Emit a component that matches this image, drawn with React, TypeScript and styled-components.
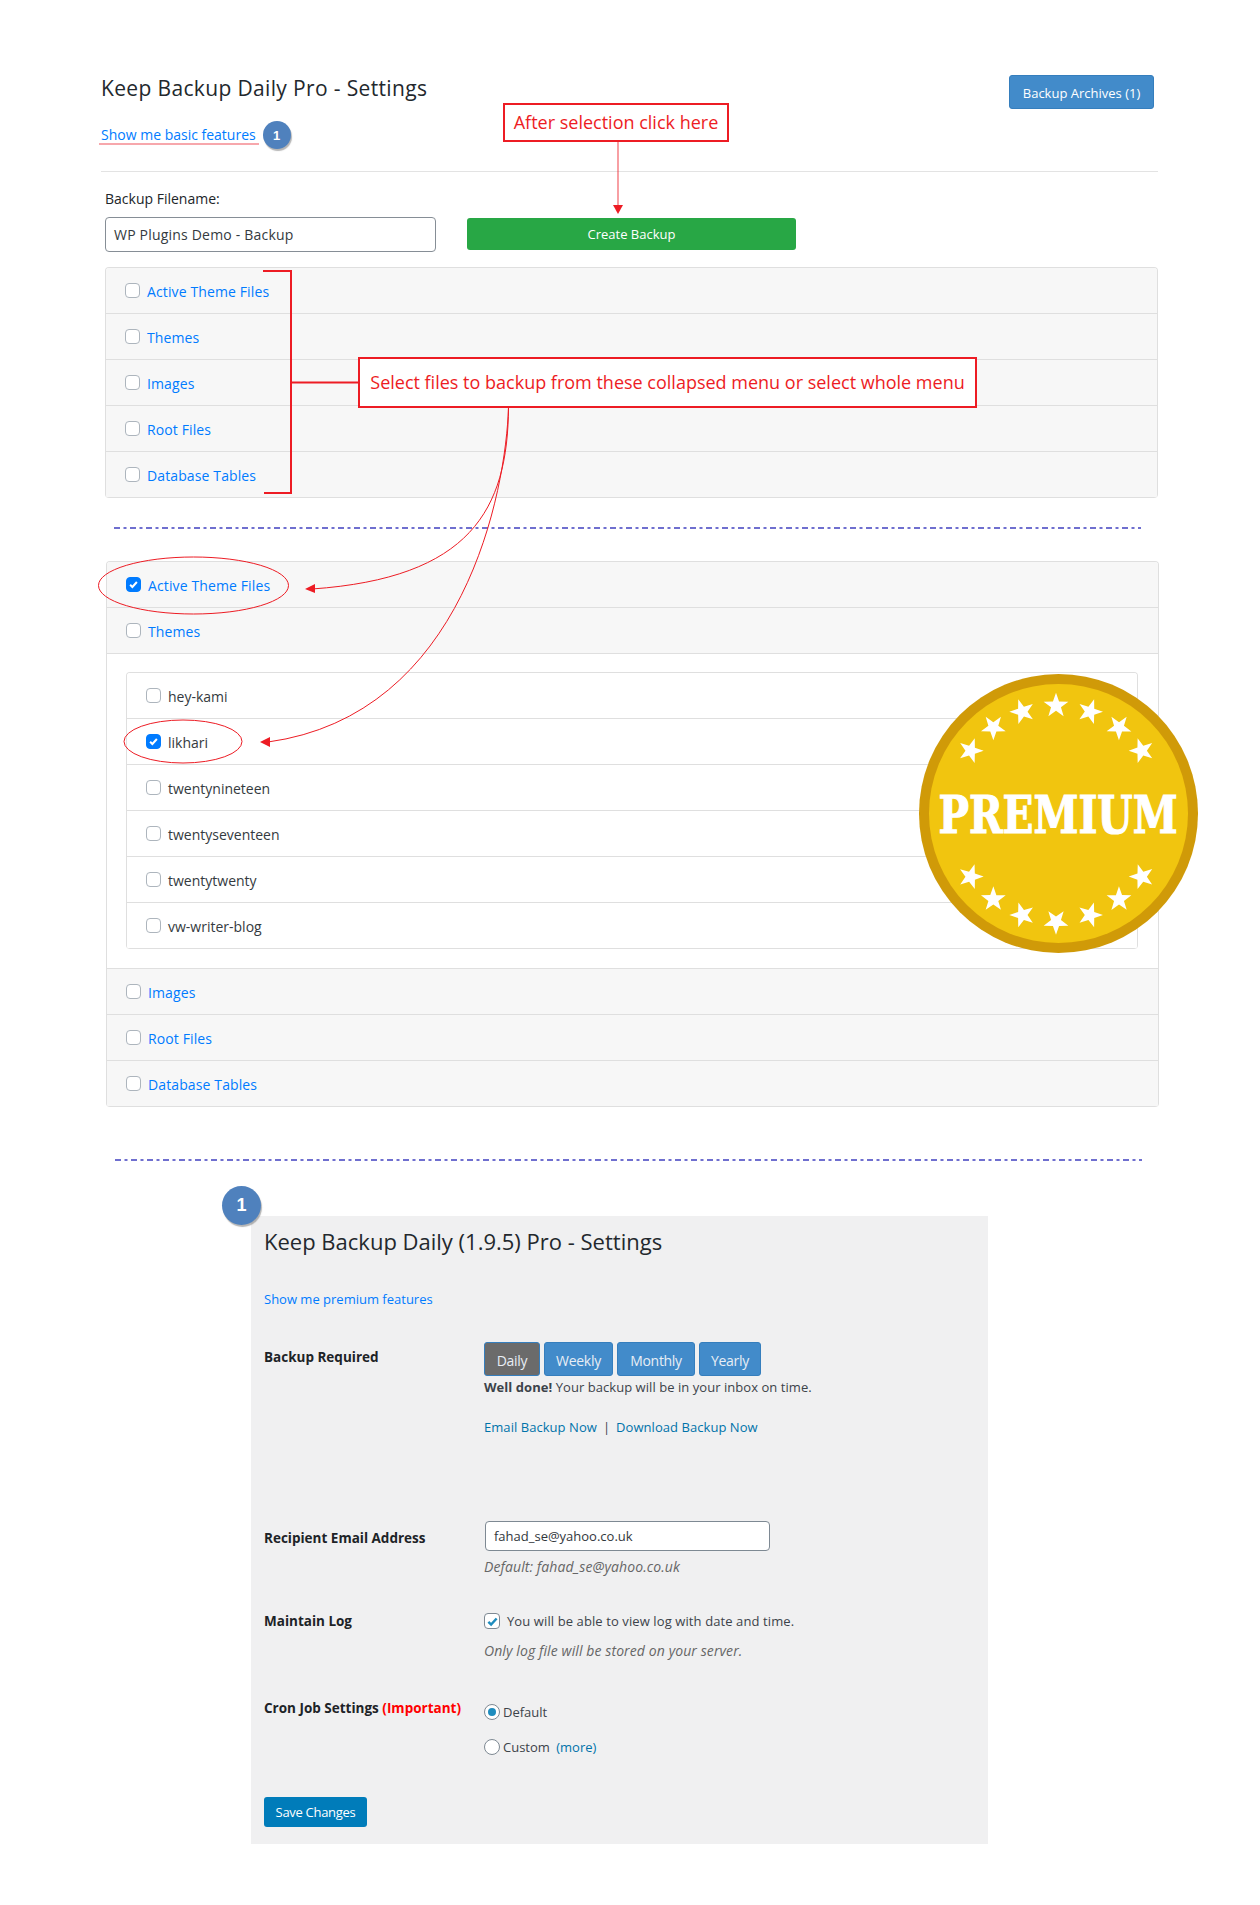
import React from 'react';
import styled, { createGlobalStyle } from 'styled-components';

const FONT = `"Open Sans", "Noto Sans", "Liberation Sans", sans-serif`;
const RED = '#ed1c24';

const Global = createGlobalStyle`
  html, body { margin: 0; padding: 0; background: #fff; }
  * { box-sizing: border-box; }
  body { font-family: ${FONT}; color: #212529; }
`;

const Page = styled.div`
  position: relative;
  width: 1260px;
  height: 1905px;
  overflow: hidden;
  padding-top: 74px;
`;

const Top = styled.div`
  margin: 0 102px 0 105px;
`;

const Header = styled.header`
  display: flex;
  justify-content: space-between;
  align-items: flex-start;
  height: 98px;
  border-bottom: 1px solid #e3e3e3;
  margin-left: -4px;
  padding-right: 4px;
`;

const HeaderLeft = styled.div`
  display: flex;
  flex-direction: column;
  gap: 19px;
`;

const Title = styled.h1`
  margin: 0;
  font-size: 21px;
  line-height: 28px;
  font-weight: 400;
  letter-spacing: 0.35px;
  color: #23282d;
`;

const LinkRow = styled.div`
  display: flex;
  align-items: center;
  gap: 7px;
  height: 28px;
`;

const BasicLink = styled.a`
  font-size: 14px;
  line-height: 20px;
  color: #007bff;
`;

const Badge = styled.span<{ $size: number; $font: number }>`
  display: inline-flex;
  align-items: center;
  justify-content: center;
  width: ${p => p.$size}px;
  height: ${p => p.$size}px;
  border-radius: 50%;
  background: #4f81bd;
  color: #fff;
  font-family: "Liberation Sans", sans-serif;
  font-weight: 700;
  font-size: ${p => p.$font}px;
  box-shadow: 1px 2px 1px rgba(120, 120, 120, 0.55);
  flex: none;
`;

const ArchiveButton = styled.button`
  width: 145px;
  height: 34px;
  margin-top: 1px;
  background: #428bca;
  border: 1px solid #357ebd;
  border-radius: 3px;
  color: #fff;
  font-family: ${FONT};
  font-size: 13px;
  padding: 2px 0 0;
`;

const FileLabel = styled.div`
  margin-top: 17px;
  font-size: 14px;
  line-height: 20px;
`;

const FileRow = styled.div`
  display: flex;
  align-items: center;
  gap: 31px;
  margin-top: 8px;
  height: 35px;
`;

const FileInput = styled.div`
  width: 331px;
  height: 35px;
  border: 1px solid #868e96;
  border-radius: 4px;
  padding: 0 8px;
  display: flex;
  align-items: center;
  font-size: 14px;
  letter-spacing: 0.2px;
  color: #343a40;
`;

const GreenButton = styled.button`
  width: 329px;
  height: 32px;
  margin-bottom: 2px;
  background: #28a745;
  border: 0;
  border-radius: 3px;
  color: #fff;
  font-family: ${FONT};
  font-size: 13px;
  padding: 0;
`;

const Accordion = styled.div<{ $top: number; $shift?: number }>`
  margin-top: ${p => p.$top}px;
  margin-left: ${p => p.$shift || 0}px;
  margin-right: ${p => -(p.$shift || 0)}px;
  border: 1px solid #dfdfdf;
  border-bottom: 0;
  border-radius: 4px;
  overflow: hidden;
`;

const Row = styled.div<{ $plain?: boolean; $pad: number }>`
  display: flex;
  align-items: center;
  gap: 7px;
  height: 46px;
  padding-left: ${p => p.$pad}px;
  padding-top: 1px;
  background: ${p => (p.$plain ? '#fff' : '#f7f7f7')};
  border-bottom: 1px solid #dfdfdf;
`;

const RowLink = styled.a`
  font-size: 14px;
  letter-spacing: 0.12px;
  color: #007bff;
`;

const RowText = styled.span`
  font-size: 14px;
  color: #343a40;
`;

const Box = styled.span<{ $on?: boolean }>`
  display: inline-flex;
  align-items: center;
  justify-content: center;
  width: 15px;
  height: 15px;
  margin-top: -2px;
  border-radius: 4px;
  background: ${p => (p.$on ? '#007bff' : '#fff')};
  border: 1px solid ${p => (p.$on ? '#007bff' : '#adb5bd')};
  flex: none;
`;

const Body = styled.div`
  padding: 18px 20px 19px 19px;
  border-bottom: 1px solid #dfdfdf;
  background: #fff;
`;

const Inner = styled.div`
  border: 1px solid #dfdfdf;
  border-bottom: 0;
  border-radius: 4px;
  overflow: hidden;
`;

const Divider = styled.svg<{ $top: number; $left: number }>`
  display: block;
  width: 1027px;
  height: 2px;
  margin-top: ${p => p.$top}px;
  margin-left: ${p => p.$left}px;
`;

const Panel = styled.section`
  position: relative;
  width: 737px;
  height: 628px;
  margin: 55px 0 0 251px;
  padding: 10px 13px 0;
  background: #f0f0f1;
  font-size: 13px;
  color: #3c434a;
`;

const CornerBadge = styled.div`
  position: absolute;
  left: -29px;
  top: -30px;
`;

const PanelTitle = styled.h2`
  margin: 0;
  font-size: 22px;
  line-height: 30px;
  font-weight: 400;
  color: #23282d;
`;

const PremiumLink = styled.a`
  display: block;
  margin-top: 33px;
  line-height: 20px;
  font-size: 13px;
  color: #007bff;
`;

const Setting = styled.div<{ $top: number }>`
  display: grid;
  grid-template-columns: 220px 1fr;
  margin-top: ${p => p.$top}px;
`;

const SettingLabel = styled.div<{ $pt?: number }>`
  padding-top: ${p => p.$pt || 0}px;
  font-weight: 700;
  line-height: 20px;
  font-size: 13.5px;
  color: #1d2327;
`;

const Important = styled.span`
  color: #f00;
`;

const FreqGroup = styled.div`
  display: flex;
  gap: 4px;
`;

const FreqButton = styled.span<{ $active?: boolean; $w: number }>`
  display: inline-flex;
  align-items: center;
  justify-content: center;
  width: ${p => p.$w}px;
  height: 34px;
  padding-top: 2px;
  border-radius: 3px;
  border: 1px solid #357ebd;
  background: ${p => (p.$active ? '#6b6b6b' : '#428bca')};
  color: #e8eef5;
  font-size: 14px;
  letter-spacing: -0.3px;
`;

const Line = styled.div<{ $top?: number }>`
  margin-top: ${p => p.$top || 0}px;
  line-height: 20px;
  letter-spacing: 0.05px;
`;

const Strong = styled.strong`
  font-weight: 700;
`;

const WpLink = styled.a`
  color: #0073aa;
`;

const Sep = styled.span`
  margin: 0 6px;
  color: #3c434a;
`;

const EmailInput = styled.div`
  width: 285px;
  height: 30px;
  margin-left: 1px;
  border: 1px solid #7e8993;
  border-radius: 4px;
  background: #fff;
  padding: 0 8px;
  display: flex;
  align-items: center;
  font-size: 13px;
  color: #32373c;
`;

const Hint = styled.div<{ $top: number }>`
  margin-top: ${p => p.$top}px;
  line-height: 20px;
  font-style: italic;
  font-size: 14px;
  letter-spacing: 0.1px;
  color: #666;
`;

const Check = styled.div`
  display: flex;
  align-items: center;
  gap: 7px;
  line-height: 20px;
  letter-spacing: 0.1px;
`;

const WpBox = styled.span`
  display: inline-flex;
  align-items: center;
  justify-content: center;
  width: 16px;
  height: 16px;
  border: 1px solid #7e8993;
  border-radius: 4px;
  background: #fff;
  flex: none;
`;

const RadioRow = styled.div<{ $top?: number }>`
  display: flex;
  align-items: center;
  gap: 3px;
  margin-top: ${p => p.$top || 0}px;
  line-height: 20px;
`;

const Radio = styled.span<{ $on?: boolean }>`
  display: inline-flex;
  align-items: center;
  justify-content: center;
  width: 16px;
  height: 16px;
  border-radius: 50%;
  border: 1px solid #7e8993;
  background: #fff;
  flex: none;
  &::after {
    content: '';
    display: ${p => (p.$on ? 'block' : 'none')};
    width: 8px;
    height: 8px;
    border-radius: 50%;
    background: #1e8cbe;
  }
`;

const SaveButton = styled.button`
  display: block;
  margin-top: 40px;
  width: 103px;
  height: 30px;
  background: #007cba;
  border: 0;
  border-radius: 3px;
  color: #fff;
  font-family: ${FONT};
  font-size: 13px;
  letter-spacing: -0.3px;
  padding: 0;
`;

const Callout = styled.div<{ $x: number; $y: number; $w: number; $h: number; $size: number }>`
  position: absolute;
  left: ${p => p.$x}px;
  top: ${p => p.$y}px;
  width: ${p => p.$w}px;
  height: ${p => p.$h}px;
  display: flex;
  align-items: center;
  justify-content: center;
  padding-bottom: 2px;
  border: 2px solid ${RED};
  background: #fff;
  color: ${RED};
  font-size: ${p => p.$size}px;
  white-space: nowrap;
`;

const Overlay = styled.svg`
  position: absolute;
  left: 0;
  top: 0;
  width: 1260px;
  height: 1905px;
  pointer-events: none;
`;

const Seal = styled.svg`
  position: absolute;
  left: 918px;
  top: 673px;
  width: 281px;
  height: 281px;
`;

const CheckMark = ({ color = '#fff', size = 9 }: { color?: string; size?: number }) => (
  <svg width={size} height={size} viewBox="0 0 8 8">
    <path d="M1 4.2 L3 6.2 L7 1.8" fill="none" stroke={color} strokeWidth="1.8" />
  </svg>
);

const TOP_ROWS = ['Active Theme Files', 'Themes', 'Images', 'Root Files', 'Database Tables'];
const THEMES = ['hey-kami', 'likhari', 'twentynineteen', 'twentyseventeen', 'twentytwenty', 'vw-writer-blog'];

const starPoints = (() => {
  const pts: string[] = [];
  for (let i = 0; i < 10; i++) {
    const r = i % 2 === 0 ? 13 : 5.2;
    const a = (Math.PI / 5) * i - Math.PI / 2;
    pts.push(`${(r * Math.cos(a)).toFixed(2)},${(r * Math.sin(a)).toFixed(2)}`);
  }
  return pts.join(' ');
})();

const STARS: [number, number][] = [
  [212, 302], [280, 232], [367, 185], [468, 167], [570, 185], [657, 232], [725, 302],
  [212, 680], [280, 748], [367, 795], [468, 815], [570, 795], [657, 748], [725, 680],
];

const PremiumSeal = () => (
  <Seal viewBox="0 0 281 281">
    <circle cx="140.5" cy="140.5" r="139.5" fill="#d09a08" />
    <circle cx="140.5" cy="140.5" r="129.5" fill="#f1c50f" />
    {STARS.map(([zx, zy], i) => {
      const x = zx / 3 - 18 + 0;
      const y = zy / 3 - 23;
      const rot = (Math.atan2(zx - 468, 490 - zy) * 180) / Math.PI;
      return <polygon key={i} points={starPoints} fill="#fff" transform={`translate(${x} ${y}) rotate(${rot})`} />;
    })}
    <g transform="translate(140 160) scale(0.78 1)">
      <text
        x="0"
        y="0"
        textAnchor="middle"
        fontFamily="DejaVu Serif, Liberation Serif, serif"
        fontWeight="700"
        fontSize="52"
        fill="#fff"
        stroke="#fff"
        strokeWidth="1.2"
      >
        PREMIUM
      </text>
    </g>
  </Seal>
);

const Annotations = () => (
  <Overlay viewBox="0 0 1260 1905">
    <line x1="99" y1="144" x2="259" y2="144" stroke="#f58a90" strokeWidth="1.5" />
    <line x1="618" y1="142" x2="618" y2="206" stroke={RED} strokeOpacity="0.6" strokeWidth="1.4" />
    <polygon points="613,205 623,205 618,214" fill={RED} />
    <path d="M263 271 H291 V493 H264 M291 382.5 H359" fill="none" stroke={RED} strokeWidth="2" />
    <path d="M508.5 407 C508 510, 470 578, 312 589" fill="none" stroke={RED} strokeWidth="1" />
    <path d="M508.5 407 C506 490, 465 715, 268 742" fill="none" stroke={RED} strokeWidth="1" />
    <polygon points="305,589 315,584 315,593" fill={RED} />
    <polygon points="260,742 270,737 270,747" fill={RED} />
    <ellipse cx="193.5" cy="585.5" rx="95" ry="28.5" fill="none" stroke={RED} strokeWidth="1" />
    <ellipse cx="183" cy="741.5" rx="59" ry="21.5" fill="none" stroke={RED} strokeWidth="1" />
  </Overlay>
);

const DashDot = ({ top, left }: { top: number; left: number }) => (
  <Divider $top={top} $left={left} viewBox="0 0 1027 2">
    <line x1="0" y1="1" x2="1027" y2="1" stroke="#4040c0" strokeWidth="1.5" strokeDasharray="6 3.5 3 3.5" />
  </Divider>
);

const TopRows = ({ checked, pad, to }: { checked: number; pad: number; to: number }) => (
  <>
    {TOP_ROWS.slice(0, to).map((t, i) => (
      <Row key={t} $pad={pad}>
        <Box $on={i === checked}>{i === checked && <CheckMark />}</Box>
        <RowLink>{t}</RowLink>
      </Row>
    ))}
  </>
);

export default function App() {
  return (
    <Page>
      <Global />
      <Top>
        <Header>
          <HeaderLeft>
            <Title>Keep Backup Daily Pro - Settings</Title>
            <LinkRow>
              <BasicLink>Show me basic features</BasicLink>
              <Badge $size={28} $font={13}>1</Badge>
            </LinkRow>
          </HeaderLeft>
          <ArchiveButton>Backup Archives (1)</ArchiveButton>
        </Header>
        <FileLabel>Backup Filename:</FileLabel>
        <FileRow>
          <FileInput>WP Plugins Demo - Backup</FileInput>
          <GreenButton>Create Backup</GreenButton>
        </FileRow>
        <Accordion $top={15}>
          <TopRows checked={-1} pad={19} to={5} />
        </Accordion>
      </Top>
      <DashDot top={29} left={114} />
      <Top>
        <Accordion $top={32} $shift={1}>
          <TopRows checked={0} pad={19} to={2} />
          <Body>
            <Inner>
              {THEMES.map((t, i) => (
                <Row key={t} $plain $pad={19}>
                  <Box $on={i === 1}>{i === 1 && <CheckMark />}</Box>
                  <RowText>{t}</RowText>
                </Row>
              ))}
            </Inner>
          </Body>
          {TOP_ROWS.slice(2).map(t => (
            <Row key={t} $pad={19}>
              <Box />
              <RowLink>{t}</RowLink>
            </Row>
          ))}
        </Accordion>
      </Top>
      <DashDot top={52} left={115} />
      <Panel>
        <CornerBadge>
          <Badge $size={39} $font={18}>1</Badge>
        </CornerBadge>
        <PanelTitle>Keep Backup Daily (1.9.5) Pro - Settings</PanelTitle>
        <PremiumLink>Show me premium features</PremiumLink>
        <Setting $top={33}>
          <SettingLabel $pt={5}>Backup Required</SettingLabel>
          <div>
            <FreqGroup>
              <FreqButton $active $w={56}>Daily</FreqButton>
              <FreqButton $w={69}>Weekly</FreqButton>
              <FreqButton $w={78}>Monthly</FreqButton>
              <FreqButton $w={62}>Yearly</FreqButton>
            </FreqGroup>
            <Line $top={1}><Strong>Well done!</Strong> Your backup will be in your inbox on time.</Line>
            <Line $top={20}>
              <WpLink>Email Backup Now</WpLink>
              <Sep>|</Sep>
              <WpLink>Download Backup Now</WpLink>
            </Line>
          </div>
        </Setting>
        <Setting $top={84}>
          <SettingLabel $pt={7}>Recipient Email Address</SettingLabel>
          <div>
            <EmailInput>fahad_se@yahoo.co.uk</EmailInput>
            <Hint $top={6}>Default: fahad_se@yahoo.co.uk</Hint>
          </div>
        </Setting>
        <Setting $top={34}>
          <SettingLabel>Maintain Log</SettingLabel>
          <div>
            <Check>
              <WpBox><CheckMark color="#1e8cbe" size={11} /></WpBox>
              You will be able to view log with date and time.
            </Check>
            <Hint $top={10}>Only log file will be stored on your server.</Hint>
          </div>
        </Setting>
        <Setting $top={37}>
          <SettingLabel>Cron Job Settings <Important>(Important)</Important></SettingLabel>
          <div>
            <RadioRow $top={4}><Radio $on />Default</RadioRow>
            <RadioRow $top={15}><Radio />Custom&nbsp;<WpLink>(more)</WpLink></RadioRow>
          </div>
        </Setting>
        <SaveButton>Save Changes</SaveButton>
      </Panel>
      <Annotations />
      <Callout $x={503} $y={103} $w={226} $h={39} $size={18}>After selection click here</Callout>
      <Callout $x={358} $y={357} $w={619} $h={51} $size={18}>Select files to backup from these collapsed menu or select whole menu</Callout>
      <PremiumSeal />
    </Page>
  );
}
